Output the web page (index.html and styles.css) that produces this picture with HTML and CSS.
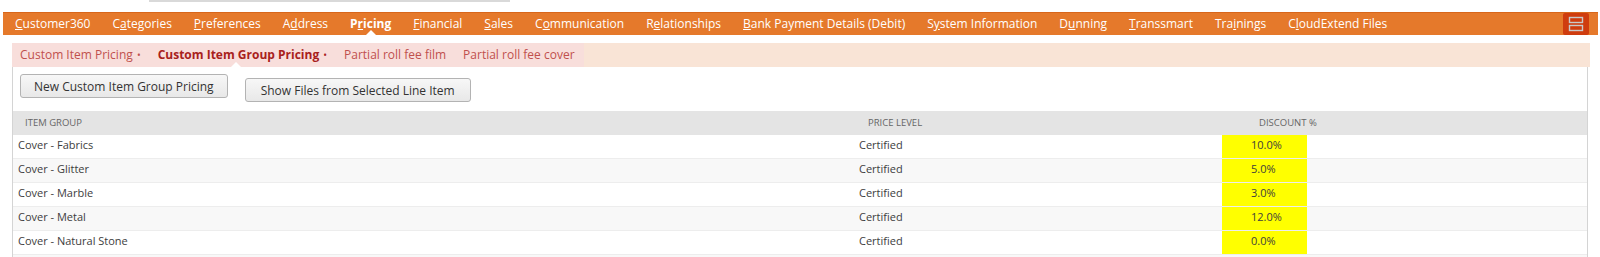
FILE: index.html
```html
<!DOCTYPE html>
<html lang="en">

<head>
    <meta charset="UTF-8" />
    <title>Customer - Pricing</title>
    <link rel="stylesheet" href="styles.css">
</head>

<body>
    <div class="topstrip">
        <div class="topline"></div>
    </div>

    <!-- main record tabs -->
    <div class="navbar">
        <div class="tabs">
            <a class="tab"><u>C</u>ustomer360</a>
            <a class="tab">C<u>a</u>tegories</a>
            <a class="tab"><u>P</u>references</a>
            <a class="tab">A<u>d</u>dress</a>
            <a class="tab active">P<u>r</u>icing</a>
            <a class="tab"><u>F</u>inancial</a>
            <a class="tab"><u>S</u>ales</a>
            <a class="tab">C<u>o</u>mmunication</a>
            <a class="tab">R<u>e</u>lationships</a>
            <a class="tab"><u>B</u>ank Payment Details (Debit)</a>
            <a class="tab">S<u>y</u>stem Information</a>
            <a class="tab">D<u>u</u>nning</a>
            <a class="tab"><u>T</u>ranssmart</a>
            <a class="tab">Tra<u>i</u>nings</a>
            <a class="tab">C<u>l</u>oudExtend Files</a>
        </div>
        <div class="layout-btn">
            <svg width="16" height="16" viewBox="0 0 16 16">
                <rect x="1.5" y="1.5" width="13" height="5" fill="none" stroke="#c9c9c9" stroke-width="1.4" />
                <rect x="1.5" y="9.5" width="13" height="5" fill="none" stroke="#c9c9c9" stroke-width="1.4" />
            </svg>
        </div>
    </div>

    <!-- subtabs -->
    <div class="subtabs">
        <div class="subtab-group">
            <a class="subtab">Custom Item Pricing <span class="dot">&bull;</span></a>
            <a class="subtab current">Custom Item Group Pricing <span class="dot">&bull;</span></a>
            <a class="subtab">Partial roll fee film</a>
            <a class="subtab">Partial roll fee cover</a>
        </div>
    </div>

    <div class="content">
        <div class="buttons">
            <button class="btn">New Custom Item Group Pricing</button>
            <button class="btn btn-low">Show Files from Selected Line Item</button>
        </div>

        <div class="grid">
            <div class="row head">
                <div class="cell c1">Item Group</div>
                <div class="cell c2">Price Level</div>
                <div class="cell c3">Discount %</div>
                <div class="cell c4"></div>
            </div>
            <div class="row">
                <div class="cell c1">Cover - Fabrics</div>
                <div class="cell c2">Certified</div>
                <div class="cell c3 hl">10.0%</div>
                <div class="cell c4"></div>
            </div>
            <div class="row odd">
                <div class="cell c1">Cover - Glitter</div>
                <div class="cell c2">Certified</div>
                <div class="cell c3 hl">5.0%</div>
                <div class="cell c4"></div>
            </div>
            <div class="row">
                <div class="cell c1">Cover - Marble</div>
                <div class="cell c2">Certified</div>
                <div class="cell c3 hl">3.0%</div>
                <div class="cell c4"></div>
            </div>
            <div class="row odd">
                <div class="cell c1">Cover - Metal</div>
                <div class="cell c2">Certified</div>
                <div class="cell c3 hl">12.0%</div>
                <div class="cell c4"></div>
            </div>
            <div class="row">
                <div class="cell c1">Cover - Natural Stone</div>
                <div class="cell c2">Certified</div>
                <div class="cell c3 hl">0.0%</div>
                <div class="cell c4"></div>
            </div>
            <div class="row odd">
                <div class="cell c1"></div>
                <div class="cell c2"></div>
                <div class="cell c3"></div>
                <div class="cell c4"></div>
            </div>
        </div>
    </div>
</body>

</html>
```

FILE: styles.css
```css
body {
    margin: 0;
    background-color: white;
    font-family: "Open Sans", "Liberation Sans", sans-serif;
    color: #333;
    overflow: hidden;
}

.topstrip {
    height: 12px;
}

.topline {
    margin-left: 149px;
    width: 361px;
    height: 2px;
    background-color: #d9d9d9;
}

/* orange record tabs */
.navbar {
    display: flex;
    justify-content: space-between;
    margin-left: 3px;
    margin-right: 2px;
    height: 23px;
    padding-right: 9px;
    background-color: #e5792b;
    border-top: 1px solid #d8661b;
    box-sizing: border-box;
}

.tabs {
    display: flex;
    padding-left: 1px;
}

.tab {
    position: relative;
    padding: 0 11px;
    color: white;
    font-size: 12px;
    line-height: 22px;
    white-space: nowrap;
}

.tab.active {
    font-weight: bold;
}

.tab.active::after {
    content: "";
    position: absolute;
    left: 50%;
    bottom: 0;
    margin-left: -5px;
    border-left: 5px solid transparent;
    border-right: 5px solid transparent;
    border-bottom: 5px solid white;
}

.layout-btn {
    width: 26px;
    height: 22px;
    background-color: #cf3c0e;
    border-radius: 2px;
    display: flex;
    align-items: center;
    justify-content: center;
}

/* subtabs */
.subtabs {
    margin: 8px 10px 0 12px;
    height: 24px;
    background-color: #f9e4d6;
    display: flex;
}

.subtab-group {
    display: flex;
    background-color: #f8dedb;
    padding-left: 8px;
    padding-right: 9px;
}

.subtab {
    position: relative;
    color: #c0504d;
    font-size: 12px;
    line-height: 24px;
    margin-right: 17px;
    white-space: nowrap;
}

.subtab:last-child {
    margin-right: 0;
}

.subtab .dot {
    font-size: 10px;
    margin-left: 1px;
}

.subtab.current {
    color: #a8211c;
    font-weight: bold;
}

.subtab.current .dot {
    font-weight: normal;
}

.subtab.current::after {
    content: "";
    position: absolute;
    left: 78px;
    bottom: 0;
    margin-left: -5px;
    border-left: 5px solid transparent;
    border-right: 5px solid transparent;
    border-bottom: 5px solid white;
}

/* content */
.content {
    margin-left: 12px;
    width: 1576px;
    border-left: 1px solid #d4d4d4;
    border-right: 1px solid #d4d4d4;
    box-sizing: border-box;
}

.buttons {
    display: flex;
    align-items: flex-start;
    gap: 17px;
    height: 44px;
    padding: 7px 0 0 7px;
    box-sizing: border-box;
}

.btn {
    font-family: "Open Sans", "Liberation Sans", sans-serif;
    font-size: 12px;
    color: #333;
    height: 24px;
    padding: 0 13px;
    background: linear-gradient(#f7f7f7, #e8e8e8);
    border: 1px solid #b3b3b3;
    border-radius: 3px;
}

.btn-low {
    margin-top: 4px;
    padding: 0 15px;
}

.grid {
    display: flex;
    flex-direction: column;
}

.row {
    display: grid;
    grid-template-columns: 842px 367px 85px 1fr;
    height: 24px;
    border-bottom: 1px solid #ededed;
    box-sizing: border-box;
    background-color: white;
}

.row.odd {
    background-color: #f8f8f8;
}

.cell {
    font-size: 11px;
    line-height: 20px;
    color: #3d3d3d;
    white-space: nowrap;
}

.c1 {
    padding-left: 5px;
}

.c2 {
    padding-left: 4px;
}

.c3 {
    padding-left: 29px;
}

.hl {
    background-color: #ffff00;
}

.row.head {
    background-color: #e4e4e4;
    border-bottom: none;
}

.row.head .cell {
    font-size: 9.5px;
    text-transform: uppercase;
    color: #666;
    line-height: 24px;
}

.row.head .c1 {
    padding-left: 12px;
}

.row.head .c2 {
    padding-left: 13px;
}

.row.head .c3 {
    padding-left: 37px;
    overflow: visible;
}
```
